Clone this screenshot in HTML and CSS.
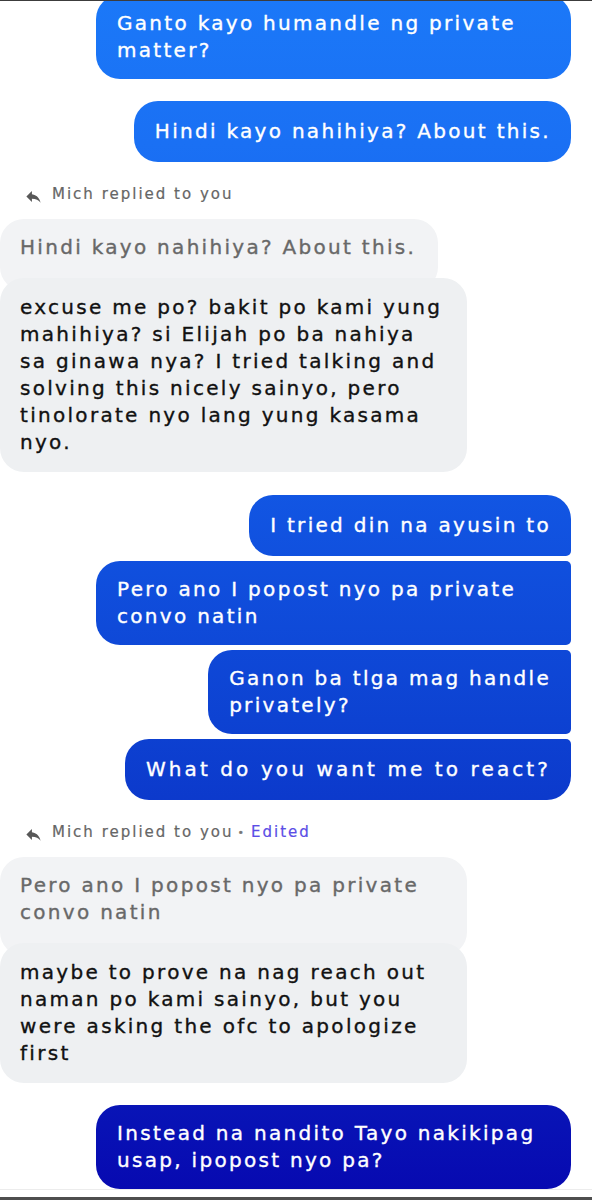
FILE: index.html
```html
<!DOCTYPE html>
<html lang="tl">
<head>
<meta charset="utf-8">
<title>Chat</title>
<link rel="stylesheet" href="styles.css">
</head>
<body>
<div class="screen">
  <div class="chat">
    <div class="row out first">
      <div class="bubble sent full">Ganto kayo humandle ng private<br>matter?</div>
    </div>
    <div class="row out gap-lg">
      <div class="bubble sent single">Hindi kayo nahihiya? About this.</div>
    </div>

    <div class="reply-note">
      <svg class="reply-icon" viewBox="0 0 24 24" width="19" height="19" aria-hidden="true"><path d="M10 9V5l-7 7 7 7v-4.1c5 0 8.5 1.6 11 5.1-1-5-4-10-11-11z"/></svg>
      <span>Mich replied to you</span>
    </div>
    <div class="row in">
      <div class="bubble quoted">Hindi kayo nahihiya? About this.</div>
    </div>
    <div class="row in overlap">
      <div class="bubble received full-in">excuse me po? bakit po kami yung<br>mahihiya? si Elijah po ba nahiya<br>sa ginawa nya? I tried talking and<br>solving this nicely sainyo, pero<br>tinolorate nyo lang yung kasama<br>nyo.</div>
    </div>

    <div class="group">
      <div class="row out">
        <div class="bubble sent single g-first">I tried din na ayusin to</div>
      </div>
      <div class="row out">
        <div class="bubble sent full g-mid">Pero ano I popost nyo pa private<br>convo natin</div>
      </div>
      <div class="row out">
        <div class="bubble sent g-mid">Ganon ba tlga mag handle<br>privately?</div>
      </div>
      <div class="row out">
        <div class="bubble sent single g-last wide-text">What do you want me to react?</div>
      </div>
    </div>

    <div class="reply-note">
      <svg class="reply-icon" viewBox="0 0 24 24" width="19" height="19" aria-hidden="true"><path d="M10 9V5l-7 7 7 7v-4.1c5 0 8.5 1.6 11 5.1-1-5-4-10-11-11z"/></svg>
      <span>Mich replied to you</span><span class="dot">•</span><span class="edited">Edited</span>
    </div>
    <div class="row in">
      <div class="bubble quoted full-in">Pero ano I popost nyo pa private<br>convo natin</div>
    </div>
    <div class="row in overlap">
      <div class="bubble received full-in">maybe to prove na nag reach out<br>naman po kami sainyo, but you<br>were asking the ofc to apologize<br>first</div>
    </div>

    <div class="row out gap-lg last">
      <div class="bubble sent full">Instead na nandito Tayo nakikipag<br>usap, ipopost nyo pa?</div>
    </div>
  </div>
  <div class="composer"></div>
</div>
</body>
</html>
```
FILE: styles.css
```css
html, body {
  margin: 0;
  padding: 0;
  background: #ffffff;
}

.screen {
  height: 1200px;
  box-sizing: border-box;
  border-top: 1px solid #3c3c3c;
  border-bottom: 3px solid #4e4e4e;
  overflow: hidden;
  display: flex;
  flex-direction: column;
  font-family: "DejaVu Sans", "Noto Sans", sans-serif;
}

.chat {
  display: flex;
  flex-direction: column;
}

.row {
  display: flex;
}

.row.out {
  justify-content: flex-end;
  padding-right: 21px;
}

.row.in {
  justify-content: flex-start;
}

.row.first {
  margin-top: -6px;
}

.row.gap-lg {
  margin-top: 22px;
}

.bubble {
  font-size: 20px;
  line-height: 27px;
  letter-spacing: 2.3px;
  white-space: nowrap;
  box-sizing: border-box;
  border-radius: 24px;
  -webkit-text-stroke: 0.35px currentColor;
}

.bubble.sent {
  color: #ffffff;
  padding: 15px 20px 15px 21px;
  background-image: linear-gradient(180deg, #1b78f8 0%, #1a70f4 12%, #1257e4 40%, #0d42d2 60%, #0b2fc4 75%, #0708b0 100%);
  background-attachment: fixed;
  background-size: 592px 1200px;
}

.bubble.sent.single {
  padding-top: 17px;
  padding-bottom: 17px;
}

.bubble.sent.full {
  width: 475px;
}

.bubble.wide-text {
  letter-spacing: 3.1px;
}

.group {
  display: flex;
  flex-direction: column;
  gap: 5px;
  margin-top: 23px;
}

.bubble.g-first {
  border-bottom-right-radius: 5px;
}

.bubble.g-mid {
  border-top-right-radius: 5px;
  border-bottom-right-radius: 5px;
}

.bubble.g-last {
  border-top-right-radius: 5px;
}

.reply-note {
  display: flex;
  align-items: center;
  height: 20px;
  margin-top: 22px;
  margin-bottom: 15px;
  padding-left: 24px;
  font-size: 15px;
  letter-spacing: 2px;
  color: #666666;
  -webkit-text-stroke: 0.2px currentColor;
}

.reply-icon {
  fill: #585858;
  margin-right: 9px;
  margin-top: 4px;
}

.dot {
  margin: 0 5px 0 4px;
  font-size: 11px;
  color: #777777;
}

.edited {
  color: #5b4ee6;
}

.bubble.quoted {
  background: #f2f3f5;
  color: #686868;
  padding: 15px 22px 30px 20px;
}

.bubble.received {
  background: #eef0f2;
  color: #111111;
  padding: 16px 22px 16px 20px;
}

.row.overlap {
  margin-top: -13px;
  position: relative;
}

.bubble.full-in {
  width: 467px;
}

.row.last {
  margin-top: 22px;
}

.composer {
  flex: 1;
  border-top: 1px solid #ececec;
}
```
